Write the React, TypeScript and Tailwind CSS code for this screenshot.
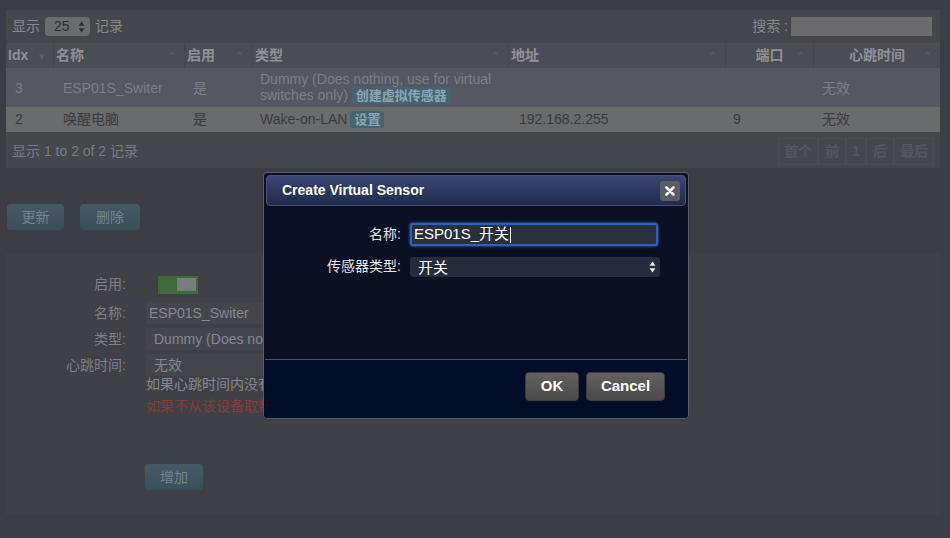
const font = "font-['Liberation_Sans','Noto_Sans_CJK_SC',sans-serif]"

const cols = [
  { label: 'Idx', w: 'w-[47px]', arrow: '▾', center: false },
  { label: '名称', w: 'w-[131px]', arrow: '⌃', center: false },
  { label: '启用', w: 'w-[68px]', arrow: '⌃', center: false },
  { label: '类型', w: 'w-[256px]', arrow: '⌃', center: false },
  { label: '地址', w: 'w-[217px]', arrow: '⌃', center: false },
  { label: '端口', w: 'w-[88px]', arrow: '⌃', center: true },
  { label: '心跳时间', w: 'w-[127px]', arrow: '⌃', center: true },
]

function Badge({ children }: { children: React.ReactNode }) {
  return (
    <span className="inline-block rounded-[3px] bg-[#47636f] px-[4px] text-[13px] leading-[17px] font-bold text-[#88a7b3]">
      {children}
    </span>
  )
}

function DimButton({ children, className = '' }: { children: React.ReactNode; className?: string }) {
  return (
    <div
      className={`flex h-[26px] items-center justify-center rounded-[4px] bg-gradient-to-b from-[#435a66] to-[#3b4f59] text-[14px] text-[#6f8690] ${className}`}
    >
      {children}
    </div>
  )
}

function DialogButton({ children, className = '' }: { children: React.ReactNode; className?: string }) {
  return (
    <div
      className={`flex h-[29px] items-center justify-center rounded-[4px] border border-[#3c3c3c] bg-gradient-to-b from-[#626262] via-[#555555] to-[#4a4a4a] text-[15px] font-bold text-white ${className}`}
    >
      {children}
    </div>
  )
}

function SelectArrows({ color }: { color: string }) {
  return (
    <svg width="7" height="12" viewBox="0 0 7 12" className="shrink-0">
      <path d="M3.5 0.5 L6.5 4.8 L0.5 4.8 Z" fill={color} />
      <path d="M3.5 11.5 L6.5 7.2 L0.5 7.2 Z" fill={color} />
    </svg>
  )
}

export default function App() {
  return (
    <div className={`relative h-[538px] w-[950px] overflow-hidden bg-[#3d3e43] ${font}`}>
      {/* devices table */}
      <div className="mx-[6px] mt-[10px] w-[934px] bg-[#45474d]">
        <div className="flex h-[33px] items-center justify-between pl-[6px] pr-[8px] text-[14px] text-[#85878c]">
          <div className="flex items-center gap-[5px]">
            <span>显示</span>
            <div className="flex h-[19px] w-[45px] items-center justify-between rounded-[4px] bg-[#6b6c70] pl-[9px] pr-[5px] text-[#2f3035]">
              <span>25</span>
              <SelectArrows color="#2f3035" />
            </div>
            <span>记录</span>
          </div>
          <div className="flex items-center gap-[3px]">
            <span>搜索 :</span>
            <div className="h-[19px] w-[141px] bg-[#6b6b6d]" />
          </div>
        </div>
        <div className="flex h-[25px] bg-[#4b4d54] text-[14px] font-bold text-[#8f9196]">
          {cols.map((c, i) => (
            <div
              key={c.label}
              className={`relative flex items-center ${c.w} ${i > 0 ? 'border-l border-[#44464c]' : ''} ${
                c.center ? 'justify-center' : 'pl-[2px]'
              }`}
            >
              <span>{c.label}</span>
              <span className="absolute right-[8px] top-[5px] text-[11px] font-normal text-[#5e6067]">{c.arrow}</span>
            </div>
          ))}
        </div>
        <div className="flex h-[39px] bg-[#555862] text-[14px] text-[#7c7f86]">
          <div className="w-[47px] pl-[9px] pt-[10px]">3</div>
          <div className="w-[131px] pl-[10px] pt-[10px]">ESP01S_Switer</div>
          <div className="w-[68px] pl-[9px] pt-[10px]">是</div>
          <div className="w-[256px] pl-[8px] pt-[3px] leading-[16px]">
            Dummy (Does nothing, use for virtual
            <br />
            switches only) <Badge>创建虚拟传感器</Badge>
          </div>
          <div className="w-[217px]" />
          <div className="w-[88px]" />
          <div className="w-[127px] pl-[9px] pt-[10px]">无效</div>
        </div>
        <div className="flex h-[25px] items-center bg-[#6a6b6d] text-[14px] text-[#3a3b3f]">
          <div className="w-[47px] pl-[9px]">2</div>
          <div className="w-[131px] pl-[10px]">唤醒电脑</div>
          <div className="w-[68px] pl-[9px]">是</div>
          <div className="flex w-[256px] items-center gap-[3px] pl-[8px]">
            Wake-on-LAN <Badge>设置</Badge>
          </div>
          <div className="w-[217px] pl-[11px]">192.168.2.255</div>
          <div className="w-[88px] pl-[8px]">9</div>
          <div className="w-[127px] pl-[9px]">无效</div>
        </div>
        <div className="flex h-[36px] items-center justify-between pl-[6px] pr-[6px] pt-[2px] text-[14px]">
          <span className="text-[#797b80]">显示 1 to 2 of 2 记录</span>
          <div className="flex items-center text-[14px] font-bold text-[#55575d]">
            <span className="border border-[#4a4c52] px-[5px] py-[2px]">首个</span>
            <span className="border border-[#4a4c52] px-[6px] py-[2px]">前</span>
            <span className="border border-[#4a4c52] px-[5px] py-[2px]">1</span>
            <span className="border border-[#4a4c52] px-[6px] py-[2px]">后</span>
            <span className="border border-[#4a4c52] px-[5px] py-[2px]">最后</span>
          </div>
        </div>
      </div>

      {/* action buttons */}
      <div className="mt-[36px] flex gap-[16px] pl-[7px]">
        <DimButton className="w-[57px]">更新</DimButton>
        <DimButton className="w-[60px]">删除</DimButton>
      </div>

      {/* edit form */}
      <div className="mx-[6px] mt-[23px] h-[262px] w-[934px] bg-[#404147] pt-[21px] text-[14px]">
        <div className="grid grid-cols-[120px_1fr] items-center gap-x-[20px] gap-y-[4px]">
          <span className="text-right text-[#7d7f84]">启用:</span>
          <div className="ml-[12px] flex h-[18px] w-[40px] items-center justify-end bg-[#3e6a3c] pr-[2px]">
            <div className="h-[13px] w-[19px] bg-[#7a7b7d]" />
          </div>
          <span className="mt-[3px] text-right text-[#7d7f84]">名称:</span>
          <div className="mt-[3px] flex h-[22px] w-[200px] items-center bg-[#45464c] pl-[3px] text-[#85878c]">
            ESP01S_Switer
          </div>
          <span className="text-right text-[#7d7f84]">类型:</span>
          <div className="flex h-[22px] w-[200px] items-center bg-[#45464c] pl-[8px] text-[#85878c]">
            Dummy (Does not
          </div>
          <span className="text-right text-[#7d7f84]">心跳时间:</span>
          <div className="flex h-[22px] w-[200px] items-center bg-[#45464c] pl-[8px] text-[#85878c]">
            无效
          </div>
        </div>
        <div className="ml-[140px] -mt-[2px] text-[#85878c]">如果心跳时间内没有收到数据</div>
        <div className="ml-[140px] mt-[1px] text-[#8a3a3c]">如果不从该设备取数据</div>
        <DimButton className="ml-[139px] mt-[47px] w-[58px]">增加</DimButton>
      </div>

      {/* dialog */}
      <div className="absolute left-[263px] top-[172px] flex h-[247px] w-[426px] flex-col overflow-hidden rounded-[4px] border border-[#5a5e6a] bg-[#0c1022]">
        <div className="m-[2px] flex h-[31px] shrink-0 items-center justify-between rounded-[4px] border border-[#46517a] bg-gradient-to-b from-[#3b4772] to-[#1f2a4e] pl-[15px] pr-[5px]">
          <span className="text-[14px] font-bold text-white">Create Virtual Sensor</span>
          <div className="flex h-[20px] w-[20px] items-center justify-center rounded-[3px] bg-[#5c5d62]">
            <svg width="10" height="10" viewBox="0 0 10 10">
              <path d="M1.5 1.5 L8.5 8.5 M8.5 1.5 L1.5 8.5" stroke="#ffffff" strokeWidth="2.6" strokeLinecap="round" />
            </svg>
          </div>
        </div>
        <div className="flex-1 bg-gradient-to-b from-[#0b1025] to-[#0d1022] pt-[15px] text-[14px]">
          <div className="grid grid-cols-[137px_1fr] items-center gap-x-[9px] gap-y-[10px]">
            <span className="text-right text-[#e4e6ec]">名称:</span>
            <div className="flex h-[23px] w-[248px] items-center rounded-[3px] border-2 border-[#2f62b6] bg-[#2a2f3e] pl-[2px] text-[15px] text-white shadow-[0_0_3px_#3b78d8]">
              ESP01S_开关<span className="ml-[1px] h-[16px] w-[1px] bg-white" />
            </div>
            <span className="text-right text-[#e4e6ec]">传感器类型:</span>
            <div className="flex h-[20px] w-[250px] items-center justify-between rounded-[4px] bg-[#262b3d] pl-[8px] pr-[4px] text-[15px] text-white">
              <span className="mt-[4px]">开关</span>
              <SelectArrows color="#e8e8e8" />
            </div>
          </div>
        </div>
        <div className="mx-[1px] h-px bg-[#4b4f5c]" />
        <div className="flex h-[58px] shrink-0 items-start justify-end gap-[7px] bg-[#010e28] pr-[23px] pt-[12px]">
          <DialogButton className="w-[54px]">OK</DialogButton>
          <DialogButton className="w-[79px]">Cancel</DialogButton>
        </div>
      </div>
    </div>
  )
}
